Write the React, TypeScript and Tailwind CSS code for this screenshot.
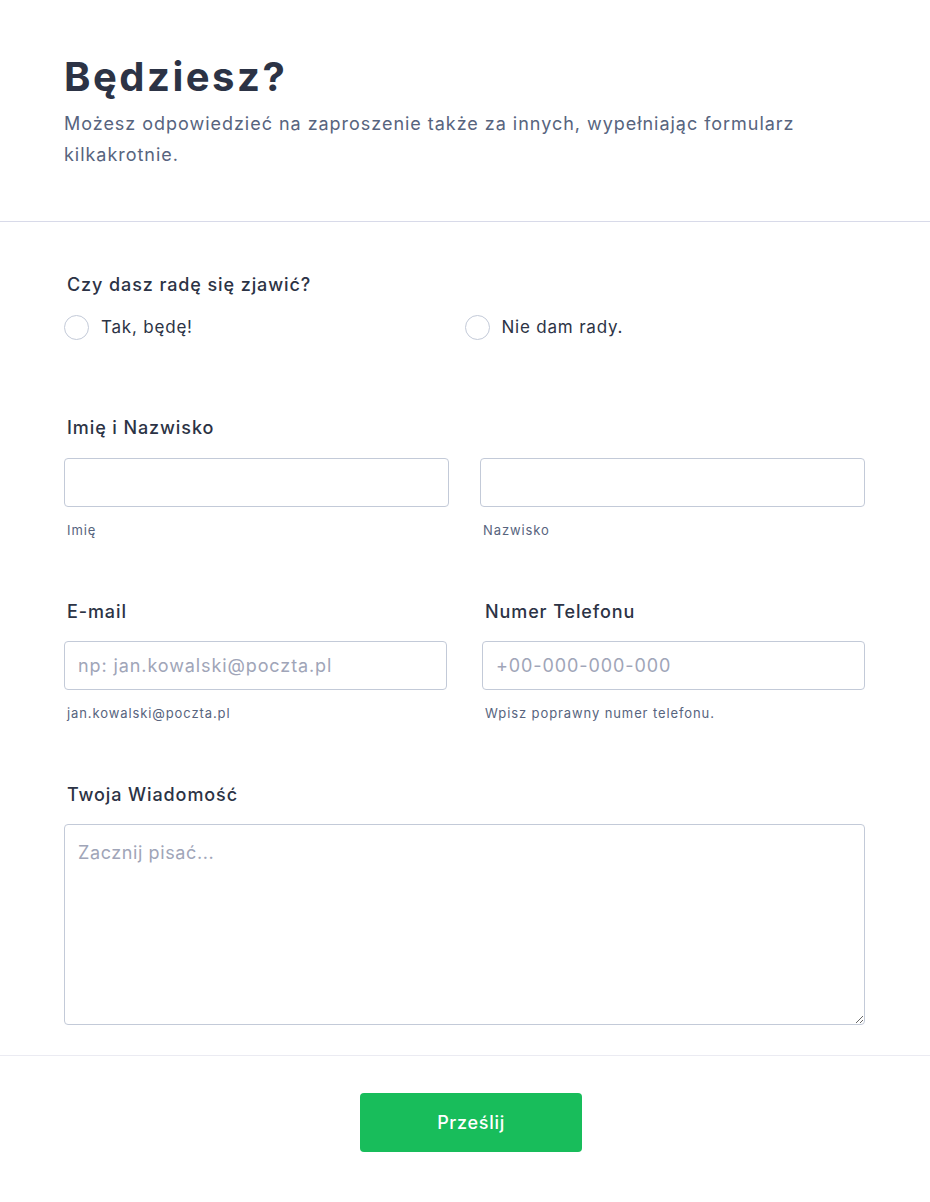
const font = { fontFamily: "Inter, 'Noto Sans', sans-serif" };

function Radio({ label }: { label: string }) {
  return (
    <label className="flex items-center gap-3 text-[17px] tracking-[0.8px] text-[#2c3345]">
      <span className="h-[25px] w-[25px] rounded-full border border-[#c3cad8] bg-white" />
      {label}
    </label>
  );
}

function Field({
  placeholder,
  hint,
}: {
  placeholder?: string;
  hint: string;
}) {
  return (
    <div className="flex flex-col">
      <input
        placeholder={placeholder}
        className="h-[49px] w-full rounded-[4px] border border-[#c3cad8] bg-white px-[13px] text-[18px] tracking-[0.9px] text-[#2c3345] outline-none placeholder:text-[#a0a5b8]"
      />
      <span className="mt-[14px] px-[3px] text-[13px] tracking-[0.9px] text-[#57647e]">{hint}</span>
    </div>
  );
}

const labelCls = "px-[3px] text-[18px] font-medium leading-6 tracking-[0.9px] text-[#2c3345]";

export default function App() {
  return (
    <div className="min-h-screen w-[930px] bg-white" style={font}>
      <header className="border-b border-[#d8dae9] pl-16 pr-[65px] pt-[53px] pb-[51px]">
        <h1 className="text-[40px] font-bold leading-[48px] tracking-[2.5px] text-[#2c3345]">Będziesz?</h1>
        <p className="mt-[7px] max-w-[780px] text-[18px] leading-[31px] tracking-[0.97px] text-[#57647e]">
          Możesz odpowiedzieć na zaproszenie także za innych, wypełniając formularz kilkakrotnie.
        </p>
      </header>

      <div className="border-b border-[#ebebf2] pl-16 pr-[65px] pt-[51px] pb-[30px]">
        <div className={labelCls}>Czy dasz radę się zjawić?</div>
        <div className="mt-[18px] grid grid-cols-2">
          <Radio label="Tak, będę!" />
          <Radio label="Nie dam rady." />
        </div>

        <div className={`mt-[75px] ${labelCls}`}>Imię i Nazwisko</div>
        <div className="mt-[18px] grid grid-cols-2 gap-[31px]">
          <Field hint="Imię" />
          <Field hint="Nazwisko" />
        </div>

        <div className="mt-[60px] grid grid-cols-2 gap-[35px]">
          <div>
            <div className={labelCls}>E-mail</div>
            <div className="mt-[17px]">
              <Field placeholder="np: jan.kowalski@poczta.pl" hint="jan.kowalski@poczta.pl" />
            </div>
          </div>
          <div>
            <div className={labelCls}>Numer Telefonu</div>
            <div className="mt-[17px]">
              <Field placeholder="+00-000-000-000" hint="Wpisz poprawny numer telefonu." />
            </div>
          </div>
        </div>

        <div className={`mt-[59px] ${labelCls}`}>Twoja Wiadomość</div>
        <textarea
          placeholder="Zacznij pisać..."
          className="mt-[17px] block h-[201px] w-full rounded-[4px] border border-[#c3cad8] bg-white px-[13px] py-[14px] text-[18px] tracking-[0.6px] text-[#2c3345] outline-none placeholder:text-[#a0a5b8]"
        />
      </div>

      <div className="flex justify-center pt-[37px] pb-[50px] pl-[12px]">
        <button className="h-[59px] w-[222px] rounded-[4px] bg-[#18bd5b] text-[18px] font-medium tracking-[0.7px] text-white">
          Prześlij
        </button>
      </div>
    </div>
  );
}
